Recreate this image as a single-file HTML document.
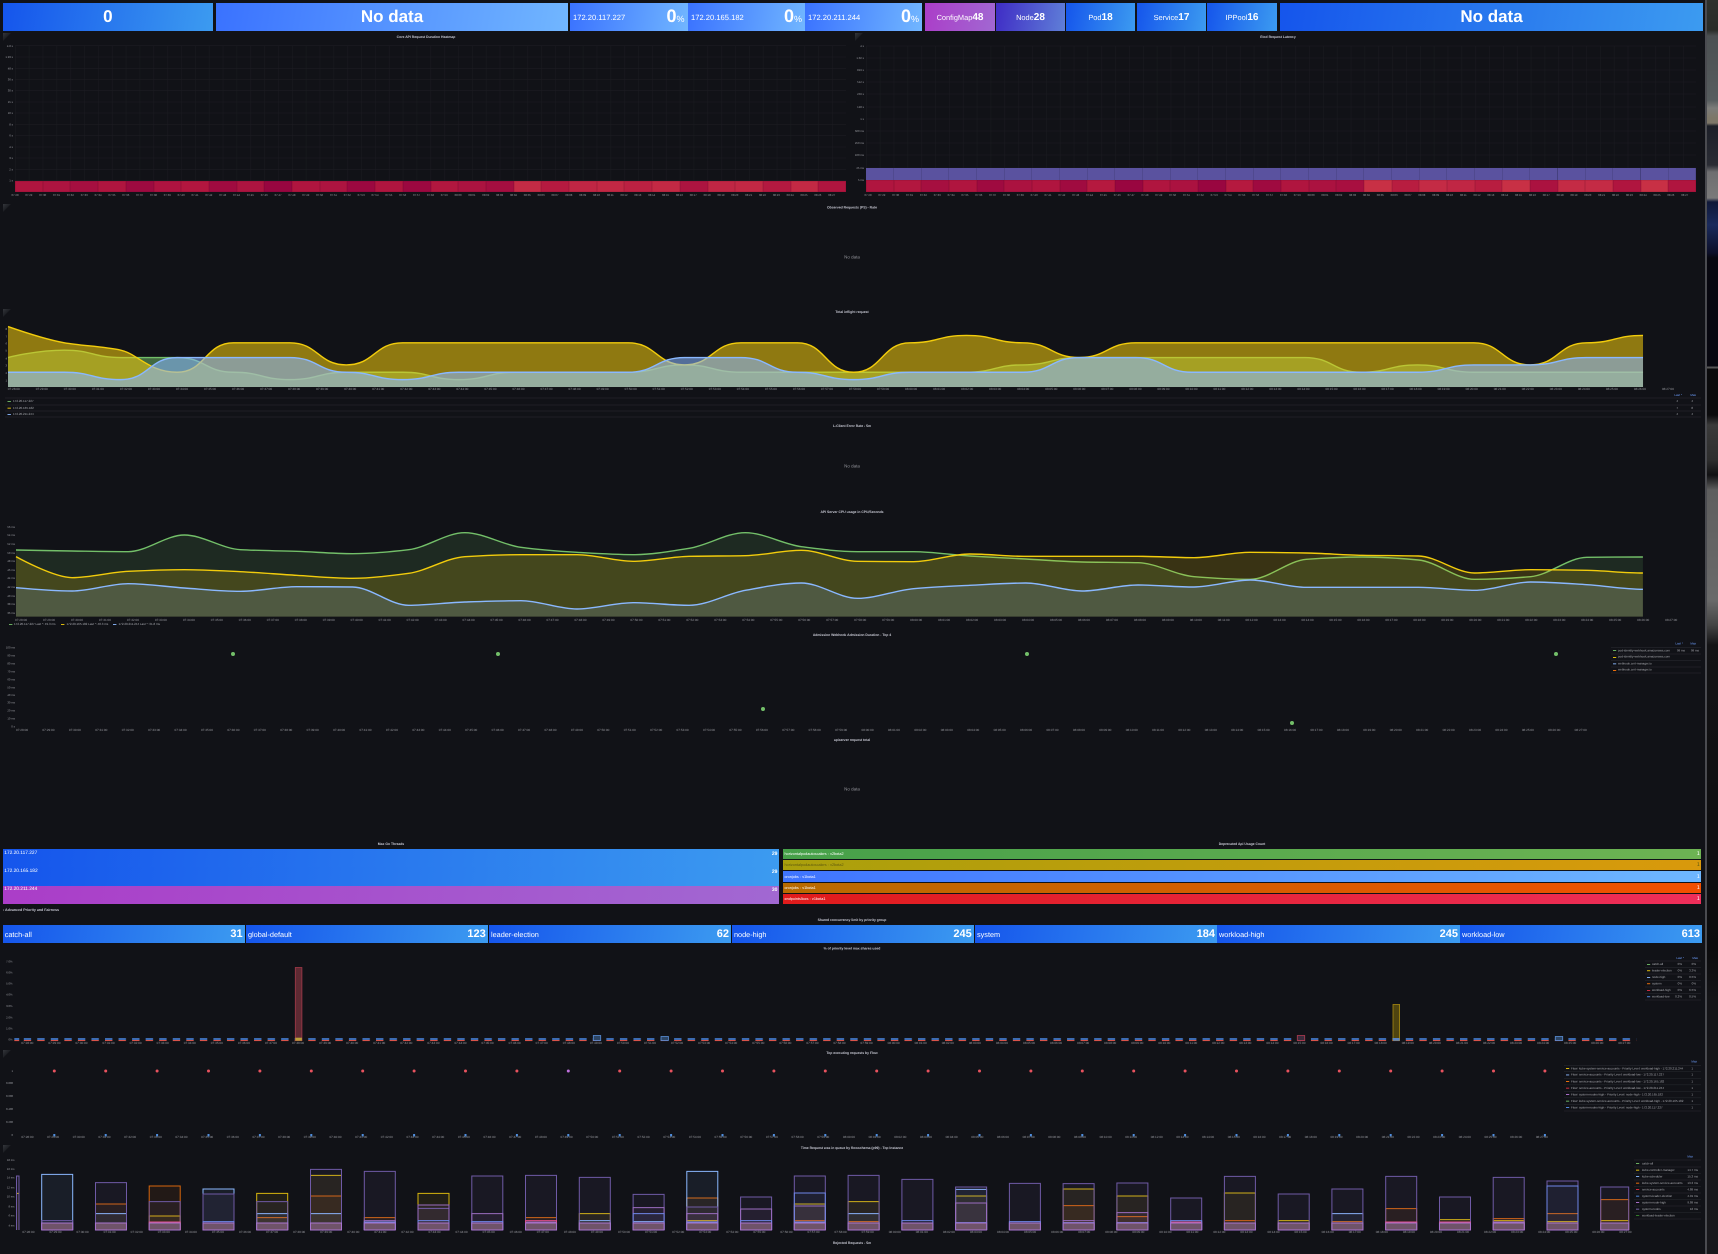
<!DOCTYPE html>
<html><head><meta charset="utf-8"><title>Kubernetes API Server Dashboard</title>
<style>
html,body{margin:0;padding:0;background:#111217}
body{position:relative;width:1718px;height:1254px;overflow:hidden;font-family:"Liberation Sans",sans-serif;text-rendering:geometricPrecision}
svg{position:absolute;left:0;top:0}
svg text{font-family:"Liberation Sans",sans-serif;text-rendering:geometricPrecision}
.x{font-size:3.1px;fill:#96979d;white-space:pre}
.h{font-size:3.4px;font-weight:700;fill:#c8c9d4;text-anchor:middle}
.n{font-size:4.5px;fill:#8e8f96;text-anchor:middle}
.y{font-size:2.8px;fill:#9a9ba1;text-anchor:end}
.l{font-size:3px;fill:#a8a9af}
.v{font-size:3px;fill:#a8a9af;text-anchor:end}
.k{font-size:3px;fill:#6e9fff;text-anchor:end}
.a{stroke:none}
.w{fill:none;stroke-width:1.4;vector-effect:non-scaling-stroke}
.b{vector-effect:non-scaling-stroke;stroke-width:1;fill-opacity:.075}
.s{position:absolute;display:flex;align-items:center;color:#fff;white-space:nowrap;overflow:hidden;box-sizing:border-box}
.top{top:3.3px;height:27.7px}
.dk{background:linear-gradient(100deg,#1555ec,#3c9bf0)}
.md{background:linear-gradient(100deg,#3a72ff,#71b6ff)}
.c{justify-content:center}
.big{font-size:17px;font-weight:700}
.ip{justify-content:space-between;padding:0 3px;font-size:7.6px}
.ip b{font-size:18px;line-height:18px}.ip b small{font-size:9px;font-weight:400}
.kn{justify-content:center;font-size:7.4px}.kn b{font-size:10px}
.st{top:925px;height:18px;justify-content:space-between;padding:0 2px;font-size:7.3px}
.st b{font-size:11px}
.th{left:2.7px;width:776.3px;height:18.4px;align-items:flex-start;justify-content:space-between;padding:1.5px 1.6px;font-size:4.8px}
.th b{font-size:5px}
.dp{left:783.3px;width:917.7px;justify-content:space-between;padding:0 1.2px;font-size:3.8px}
.dp b{font-size:5.5px;font-weight:400}
.cells{position:absolute;display:flex}
.cells i{flex:1;box-shadow:inset 0 0 0 .4px rgba(60,0,20,.25)}
</style></head><body>
<svg width="1718" height="1254" viewBox="0 0 1718 1254" xmlns="http://www.w3.org/2000/svg">
<defs>
<pattern id="g1" x="15" y="0" width="13.85" height="1254" patternUnits="userSpaceOnUse"><path d="M.25 0V1254" stroke="#1a1b20" stroke-width=".5"/></pattern>
<pattern id="g2" x="866" y="0" width="13.85" height="1254" patternUnits="userSpaceOnUse"><path d="M.25 0V1254" stroke="#1a1b20" stroke-width=".5"/></pattern>
<pattern id="pb" x="23.7" y="1030" width="13.55" height="20" patternUnits="userSpaceOnUse"><rect x="0" y="8" width="7.4" height="2" fill="#3d6cb3"/><rect x="0" y="10" width="7.4" height="1.1" fill="#d9534a"/></pattern>
<linearGradient id="cn" x1="0" y1="0" x2="1" y2="1"><stop offset="0" stop-color="#34363b"/><stop offset=".55" stop-color="#1a1c20"/><stop offset=".56" stop-color="#111217"/></linearGradient>
</defs>

<!-- corners -->
<g fill="url(#cn)">
<path d="M3 33h8l-8 8z"/><path d="M855 33h8l-8 8z"/><path d="M3 204h8l-8 8z"/><path d="M3 309h8l-8 8z"/><path d="M3 1050h8l-8 8z"/><path d="M3 1145h8l-8 8z"/>
</g>

<!-- heatmap grids -->
<rect x="15" y="46" width="831" height="135" fill="url(#g1)"/>
<path stroke="#1c1d22" stroke-width=".6" d="M15 45.7H846M15 57H846M15 68.3H846M15 79.4H846M15 90.7H846M15 102H846M15 113H846M15 124.4H846M15 135.7H846M15 147H846M15 158H846M15 169.3H846M15 180.4H846"/>
<rect x="866" y="46" width="830" height="122" fill="url(#g2)"/>
<path stroke="#1c1d22" stroke-width=".6" d="M866 46H1696M866 58H1696M866 70H1696M866 82H1696M866 94H1696M866 107H1696M866 119H1696M866 131H1696M866 143H1696M866 155H1696M866 168H1696"/>

<text class="h" x="426" y="38.2">Core API Request Duration Heatmap</text>
<text class="h" x="1278" y="38.2">Etcd Request Latency</text>
<g class="y">
<text class="y" x="13" y="47">4.8 s</text><text class="y" x="13" y="58">1.93 s</text><text class="y" x="13" y="69.3">48 s</text><text class="y" x="13" y="80.4">36 s</text><text class="y" x="13" y="91.7">30 s</text><text class="y" x="13" y="103">15 s</text><text class="y" x="13" y="114">10 s</text><text class="y" x="13" y="125.4">8 s</text><text class="y" x="13" y="136.7">6 s</text><text class="y" x="13" y="148">4 s</text><text class="y" x="13" y="159">3 s</text><text class="y" x="13" y="170.3">2 s</text><text class="y" x="13" y="181.4">1 s</text>
<text class="y" x="864" y="47">4 s</text><text class="y" x="864" y="59">1.02 s</text><text class="y" x="864" y="71">819 s</text><text class="y" x="864" y="83">512 s</text><text class="y" x="864" y="95">256 s</text><text class="y" x="864" y="108">128 s</text><text class="y" x="864" y="120">1 s</text><text class="y" x="864" y="132">500 ms</text><text class="y" x="864" y="144">250 ms</text><text class="y" x="864" y="156">100 ms</text><text class="y" x="864" y="169">25 ms</text><text class="y" x="864" y="181">5 ms</text>
</g>
<text class="x" x="11.5" y="195.8" style="font-size:2.8px;word-spacing:6.07px">07:28 07:29 07:30 07:31 07:32 07:33 07:34 07:35 07:36 07:37 07:38 07:39 07:40 07:41 07:42 07:43 07:44 07:45 07:46 07:47 07:48 07:49 07:50 07:51 07:52 07:53 07:54 07:55 07:56 07:57 07:58 07:59 08:00 08:01 08:02 08:03 08:04 08:05 08:06 08:07 08:08 08:09 08:10 08:11 08:12 08:13 08:14 08:15 08:16 08:17 08:18 08:19 08:20 08:21 08:22 08:23 08:24 08:25 08:26 08:27</text>
<text class="x" x="864.5" y="195.8" style="font-size:2.8px;word-spacing:6.07px">07:28 07:29 07:30 07:31 07:32 07:33 07:34 07:35 07:36 07:37 07:38 07:39 07:40 07:41 07:42 07:43 07:44 07:45 07:46 07:47 07:48 07:49 07:50 07:51 07:52 07:53 07:54 07:55 07:56 07:57 07:58 07:59 08:00 08:01 08:02 08:03 08:04 08:05 08:06 08:07 08:08 08:09 08:10 08:11 08:12 08:13 08:14 08:15 08:16 08:17 08:18 08:19 08:20 08:21 08:22 08:23 08:24 08:25 08:26 08:27</text>

<text class="h" x="852" y="208.4">Observed Requests (PS) - Rate</text>
<text class="n" x="852" y="258.5">No data</text>

<!-- inflight -->
<text class="h" x="852" y="313">Total inflight request</text>
<g transform="translate(8,387) scale(56.38,-7.37)">
<path class="a" fill="#73BF69" fill-opacity=".5" d="M0 4S.5 5 1 5S1.5 4 2 4S2.5 4 3 4S3.5 2 4 2S4.5 1 5 1S5.5 2 6 2S6.5 2 7 2S7.5 1 8 1S8.5 2 9 2S9.5 2 10 2S10.5 2 11 2S11.5 3 12 3S12.5 2 13 2S13.5 2 14 2S14.5 2 15 2S15.5 2 16 2S16.5 2 17 2S17.5 3 18 3S18.5 4 19 4S19.5 4 20 4S20.5 4 21 4S21.5 4 22 4S22.5 4 23 4S23.5 2 24 2S24.5 3 25 3S25.5 2 26 2S26.5 2 27 2S27.5 2 28 2S28.5 2 29 2V0H0Z"/>
<path class="w" stroke="#73BF69" d="M0 4S.5 5 1 5S1.5 4 2 4S2.5 4 3 4S3.5 2 4 2S4.5 1 5 1S5.5 2 6 2S6.5 2 7 2S7.5 1 8 1S8.5 2 9 2S9.5 2 10 2S10.5 2 11 2S11.5 3 12 3S12.5 2 13 2S13.5 2 14 2S14.5 2 15 2S15.5 2 16 2S16.5 2 17 2S17.5 3 18 3S18.5 4 19 4S19.5 4 20 4S20.5 4 21 4S21.5 4 22 4S22.5 4 23 4S23.5 2 24 2S24.5 3 25 3S25.5 2 26 2S26.5 2 27 2S27.5 2 28 2S28.5 2 29 2"/>
<path class="a" fill="#F2CC0C" fill-opacity=".56" d="M0 8.2C.3 7.4 .7 6.4 1 6C1.3 5.6 1.7 5.5 2 5S2.5 2 3 2S3.5 6 4 6S4.5 6 5 6S5.5 3 6 3S6.5 6 7 6S7.5 6 8 6S8.5 6 9 6S9.5 6 10 6S10.5 6 11 6S11.5 3 12 3S12.5 6 13 6S13.5 6 14 6S14.5 2 15 2S15.5 6 16 6S16.5 7 17 7S17.5 6 18 6S18.5 4 19 4S19.5 6 20 6S20.5 6 21 6S21.5 6 22 6S22.5 6 23 6S23.5 6 24 6S24.5 6 25 6S25.5 6 26 6S26.5 3 27 3S27.5 6 28 6S28.5 7 29 7V0H0Z"/>
<path class="w" stroke="#F2CC0C" d="M0 8.2C.3 7.4 .7 6.4 1 6C1.3 5.6 1.7 5.5 2 5S2.5 2 3 2S3.5 6 4 6S4.5 6 5 6S5.5 3 6 3S6.5 6 7 6S7.5 6 8 6S8.5 6 9 6S9.5 6 10 6S10.5 6 11 6S11.5 3 12 3S12.5 6 13 6S13.5 6 14 6S14.5 2 15 2S15.5 6 16 6S16.5 7 17 7S17.5 6 18 6S18.5 4 19 4S19.5 6 20 6S20.5 6 21 6S21.5 6 22 6S22.5 6 23 6S23.5 6 24 6S24.5 6 25 6S25.5 6 26 6S26.5 3 27 3S27.5 6 28 6S28.5 7 29 7"/>
<path class="a" fill="#8AB8FF" fill-opacity=".56" d="M0 2S.5 2 1 2S1.5 1 2 1S2.5 4 3 4S3.5 4 4 4S4.5 4 5 4S5.5 2 6 2S6.5 1 7 1S7.5 2 8 2S8.5 2 9 2S9.5 2 10 2S10.5 2 11 2S11.5 4 12 4S12.5 4 13 4S13.5 2 14 2S14.5 1 15 1S15.5 2 16 2S16.5 2 17 2S17.5 2 18 2S18.5 4 19 4S19.5 4 20 4S20.5 2 21 2S21.5 2 22 2S22.5 2 23 2S23.5 2 24 2S24.5 2 25 2S25.5 3 26 3S26.5 3 27 3S27.5 4 28 4S28.5 4 29 4V0H0Z"/>
<path class="w" stroke="#8AB8FF" d="M0 2S.5 2 1 2S1.5 1 2 1S2.5 4 3 4S3.5 4 4 4S4.5 4 5 4S5.5 2 6 2S6.5 1 7 1S7.5 2 8 2S8.5 2 9 2S9.5 2 10 2S10.5 2 11 2S11.5 4 12 4S12.5 4 13 4S13.5 2 14 2S14.5 1 15 1S15.5 2 16 2S16.5 2 17 2S17.5 2 18 2S18.5 4 19 4S19.5 4 20 4S20.5 2 21 2S21.5 2 22 2S22.5 2 23 2S23.5 2 24 2S24.5 2 25 2S25.5 3 26 3S26.5 3 27 3S27.5 4 28 4S28.5 4 29 4"/>
</g>
<text class="y" x="7" y="330">8</text><text class="y" x="7" y="337.5">7</text><text class="y" x="7" y="344.5">6</text><text class="y" x="7" y="351.5">5</text><text class="y" x="7" y="359.5">4</text><text class="y" x="7" y="366.5">3</text><text class="y" x="7" y="374">2</text><text class="y" x="7" y="381.5">1</text>
<text class="x" x="7.7" y="390" style="word-spacing:15.14px">07:28:00 07:29:00 07:30:00 07:31:00 07:32:00 07:33:00 07:34:00 07:35:00 07:36:00 07:37:00 07:38:00 07:39:00 07:40:00 07:41:00 07:42:00 07:43:00 07:44:00 07:45:00 07:46:00 07:47:00 07:48:00 07:49:00 07:50:00 07:51:00 07:52:00 07:53:00 07:54:00 07:55:00 07:56:00 07:57:00 07:58:00 07:59:00 08:00:00 08:01:00 08:02:00 08:03:00 08:04:00 08:05:00 08:06:00 08:07:00 08:08:00 08:09:00 08:10:00 08:11:00 08:12:00 08:13:00 08:14:00 08:15:00 08:16:00 08:17:00 08:18:00 08:19:00 08:20:00 08:21:00 08:22:00 08:23:00 08:24:00 08:25:00 08:26:00 08:27:00</text>
<path stroke="#23252b" stroke-width=".7" d="M5 398H1701M5 405H1701M5 411H1701M5 417H1701"/>
<rect x="7.5" y="401" width="3.4" height=".9" fill="#73BF69"/><rect x="7.5" y="407.7" width="3.4" height=".9" fill="#F2CC0C"/><rect x="7.5" y="414" width="3.4" height=".9" fill="#8AB8FF"/>
<text class="l" x="13" y="402">172.20.117.227</text><text class="l" x="13" y="409">172.20.165.182</text><text class="l" x="13" y="415">172.20.211.244</text>
<text class="k" x="1682" y="396">Last *</text><text class="k" x="1696" y="396">Max</text>
<text class="v" x="1678" y="402">4</text><text class="v" x="1693" y="402">4</text><text class="v" x="1678" y="409">7</text><text class="v" x="1693" y="409">8</text><text class="v" x="1678" y="415">4</text><text class="v" x="1693" y="415">4</text>

<text class="h" x="852" y="427">L-Client Error Rate - 5m</text>
<text class="n" x="852" y="467.5">No data</text>

<!-- CPU -->
<text class="h" x="852" y="513">API Server CPU usage in CPU/Seconds</text>
<g transform="translate(16,300) scale(56.1,.33333)">
<path class="a" fill="#73BF69" fill-opacity=".14" d="M0 750S.67 752.2 1 753S1.67 755 2 755S2.67 705 3 705S3.67 746 4 749S4.67 752.1 5 754S5.67 761 6 761S6.67 755.5 7 749S7.67 698 8 698S8.67 734.5 9 742S9.67 753.8 10 757S10.67 764 11 764S11.67 754 12 745S12.67 698 13 698S13.67 732.7 14 740S14.67 755 15 755S15.67 755 16 755S16.67 764.5 17 768S17.67 774 18 777S18.67 784.9 19 786S19.67 786.7 20 788S20.67 825.5 21 830S21.67 838 22 838S22.67 782.2 23 778S23.67 771 24 771S24.67 774.8 25 780S25.67 838 26 838S26.67 834.7 27 830S27.67 772.7 28 772S28.67 771 29 771V950H0Z"/>
<path class="w" stroke="#73BF69" d="M0 750S.67 752.2 1 753S1.67 755 2 755S2.67 705 3 705S3.67 746 4 749S4.67 752.1 5 754S5.67 761 6 761S6.67 755.5 7 749S7.67 698 8 698S8.67 734.5 9 742S9.67 753.8 10 757S10.67 764 11 764S11.67 754 12 745S12.67 698 13 698S13.67 732.7 14 740S14.67 755 15 755S15.67 755 16 755S16.67 764.5 17 768S17.67 774 18 777S18.67 784.9 19 786S19.67 786.7 20 788S20.67 825.5 21 830S21.67 838 22 838S22.67 782.2 23 778S23.67 771 24 771S24.67 774.8 25 780S25.67 838 26 838S26.67 834.7 27 830S27.67 772.7 28 772S28.67 771 29 771"/>
<path class="a" fill="#F2CC0C" fill-opacity=".18" d="M0 770S.67 833 1 833S1.67 816.6 2 814S2.67 809 3 809S3.67 812.4 4 815S4.67 822.7 5 826S5.67 835 6 835S6.67 827.7 7 820S7.67 773.6 8 770S8.67 764 9 764S9.67 764 10 764S10.67 784 11 784S11.67 770.2 12 769S12.67 768.2 13 767S13.67 751 14 751S14.67 783.4 15 784S15.67 785 16 785S16.67 762 17 762S17.67 769 18 769S18.67 769 19 769S19.67 769 20 769S20.67 773 21 773S21.67 757 22 757S22.67 758 23 759S23.67 765 24 766S24.67 766.7 25 768S25.67 819 26 819S26.67 809 27 809S27.67 809.9 28 811S28.67 819 29 819V950H0Z"/>
<path class="w" stroke="#F2CC0C" d="M0 770S.67 833 1 833S1.67 816.6 2 814S2.67 809 3 809S3.67 812.4 4 815S4.67 822.7 5 826S5.67 835 6 835S6.67 827.7 7 820S7.67 773.6 8 770S8.67 764 9 764S9.67 764 10 764S10.67 784 11 784S11.67 770.2 12 769S12.67 768.2 13 767S13.67 751 14 751S14.67 783.4 15 784S15.67 785 16 785S16.67 762 17 762S17.67 769 18 769S18.67 769 19 769S19.67 769 20 769S20.67 773 21 773S21.67 757 22 757S22.67 758 23 759S23.67 765 24 766S24.67 766.7 25 768S25.67 819 26 819S26.67 809 27 809S27.67 809.9 28 811S28.67 819 29 819"/>
<path class="a" fill="#8AB8FF" fill-opacity=".16" d="M0 863S.67 873 1 873S1.67 851 2 851S2.67 860.2 3 864S3.67 874 4 874S4.67 860 5 860S5.67 860.3 6 861S6.67 916 7 916S7.67 907.9 8 906S8.67 902 9 902S9.67 927 10 927S10.67 908 11 908S11.67 916 12 916S12.67 880.9 13 871S13.67 849 14 849S14.67 895 15 895S15.67 871 16 866S16.67 858.7 17 856S17.67 849 18 849S18.67 873 19 873S19.67 855 20 855S20.67 861 21 861S21.67 840 22 840S22.67 862 23 862S23.67 862 24 862S24.67 862 25 862S25.67 871 26 871S26.67 846 27 846S27.67 850.6 28 854S28.67 868 29 868V950H0Z"/>
<path class="w" stroke="#8AB8FF" d="M0 863S.67 873 1 873S1.67 851 2 851S2.67 860.2 3 864S3.67 874 4 874S4.67 860 5 860S5.67 860.3 6 861S6.67 916 7 916S7.67 907.9 8 906S8.67 902 9 902S9.67 927 10 927S10.67 908 11 908S11.67 916 12 916S12.67 880.9 13 871S13.67 849 14 849S14.67 895 15 895S15.67 871 16 866S16.67 858.7 17 856S17.67 849 18 849S18.67 873 19 873S19.67 855 20 855S20.67 861 21 861S21.67 840 22 840S22.67 862 23 862S23.67 862 24 862S24.67 862 25 862S25.67 871 26 871S26.67 846 27 846S27.67 850.6 28 854S28.67 868 29 868"/>
</g>
<text class="y" x="15" y="528">56 ms</text><text class="y" x="15" y="536">54 ms</text><text class="y" x="15" y="545">52 ms</text><text class="y" x="15" y="554">50 ms</text><text class="y" x="15" y="562">48 ms</text><text class="y" x="15" y="571">46 ms</text><text class="y" x="15" y="579">44 ms</text><text class="y" x="15" y="588">42 ms</text><text class="y" x="15" y="597">40 ms</text><text class="y" x="15" y="605">38 ms</text><text class="y" x="15" y="614">36 ms</text>
<text class="x" x="15" y="621" style="word-spacing:15.07px">07:28:00 07:29:00 07:30:00 07:31:00 07:32:00 07:33:00 07:34:00 07:35:00 07:36:00 07:37:00 07:38:00 07:39:00 07:40:00 07:41:00 07:42:00 07:43:00 07:44:00 07:45:00 07:46:00 07:47:00 07:48:00 07:49:00 07:50:00 07:51:00 07:52:00 07:53:00 07:54:00 07:55:00 07:56:00 07:57:00 07:58:00 07:59:00 08:00:00 08:01:00 08:02:00 08:03:00 08:04:00 08:05:00 08:06:00 08:07:00 08:08:00 08:09:00 08:10:00 08:11:00 08:12:00 08:13:00 08:14:00 08:15:00 08:16:00 08:17:00 08:18:00 08:19:00 08:20:00 08:21:00 08:22:00 08:23:00 08:24:00 08:25:00 08:26:00 08:27:00</text>
<rect x="9" y="624" width="3.4" height=".9" fill="#73BF69"/><rect x="61" y="624" width="3.4" height=".9" fill="#F2CC0C"/><rect x="113" y="624" width="3.4" height=".9" fill="#8AB8FF"/>
<text class="l" x="14" y="625">172.20.117.227 Last *: 49.3 ms</text><text class="l" x="66.5" y="625">172.20.165.182 Last *: 48.3 ms</text><text class="l" x="118.5" y="625">172.20.211.244 Last *: 31.8 ms</text>

<!-- Admission -->
<text class="h" x="852" y="636">Admission Webhook Admission Duration - Top 4</text>
<text class="y" x="15" y="648.7">100 ms</text><text class="y" x="15" y="656.7">90 ms</text><text class="y" x="15" y="664.7">80 ms</text><text class="y" x="15" y="672.7">70 ms</text><text class="y" x="15" y="680.7">60 ms</text><text class="y" x="15" y="688.7">50 ms</text><text class="y" x="15" y="696">40 ms</text><text class="y" x="15" y="703.7">30 ms</text><text class="y" x="15" y="711.7">20 ms</text><text class="y" x="15" y="719.7">10 ms</text><text class="y" x="15" y="727.7">0 s</text>
<path stroke="#73BF69" stroke-width="4" stroke-linecap="round" d="M233 654h0M498 654h0M1027 654h0M1556 654h0M763 709h0M1292 723h0"/>
<text class="x" x="16" y="730.8" style="word-spacing:13.52px">07:28:00 07:29:00 07:30:00 07:31:00 07:32:00 07:33:00 07:34:00 07:35:00 07:36:00 07:37:00 07:38:00 07:39:00 07:40:00 07:41:00 07:42:00 07:43:00 07:44:00 07:45:00 07:46:00 07:47:00 07:48:00 07:49:00 07:50:00 07:51:00 07:52:00 07:53:00 07:54:00 07:55:00 07:56:00 07:57:00 07:58:00 07:59:00 08:00:00 08:01:00 08:02:00 08:03:00 08:04:00 08:05:00 08:06:00 08:07:00 08:08:00 08:09:00 08:10:00 08:11:00 08:12:00 08:13:00 08:14:00 08:15:00 08:16:00 08:17:00 08:18:00 08:19:00 08:20:00 08:21:00 08:22:00 08:23:00 08:24:00 08:25:00 08:26:00 08:27:00</text>
<path stroke="#23252b" stroke-width=".7" d="M1611 647.5H1701M1611 654H1701M1611 660.5H1701M1611 667H1701M1611 673H1701"/>
<text class="k" x="1683" y="644.7">Last *</text><text class="k" x="1696" y="644.7">Max</text>
<rect x="1613" y="650" width="3.2" height=".9" fill="#73BF69"/><rect x="1613" y="657" width="3.2" height=".9" fill="#F2CC0C"/><rect x="1613" y="663.4" width="3.2" height=".9" fill="#8AB8FF"/><rect x="1613" y="670" width="3.2" height=".9" fill="#FF780A"/>
<text class="l" x="1618" y="651.7">pod-identity-webhook.amazonaws.com</text><text class="l" x="1618" y="657.7">pod-identity-webhook.amazonaws.com</text><text class="l" x="1618" y="664.7">webhook.cert-manager.io</text><text class="l" x="1618" y="670.7">webhook.cert-manager.io</text>
<text class="v" x="1685" y="651.7">99 ms</text><text class="v" x="1699" y="651.7">99 ms</text>

<text class="h" x="852" y="741">apiserver request total</text>
<text class="n" x="852" y="790.5">No data</text>

<text class="h" x="391" y="845">Max Go Threads</text>
<text class="h" x="1242" y="845">Deprecated Api Usage Count</text>
<text x="3" y="911" style="font-size:3.6px;font-weight:700;fill:#c8c9d4">&#8250; Advanced Priority and Fairness</text>
<text class="h" x="852" y="921">Shared concurrency limit by priority group</text>
<text class="h" x="852" y="949.6">% of priority level max shares used</text>

<!-- % bars -->
<text class="y" x="12.5" y="962.7">7.0%</text><text class="y" x="12.5" y="973.7">6.0%</text><text class="y" x="12.5" y="984.7">5.0%</text><text class="y" x="12.5" y="995.7">4.0%</text><text class="y" x="12.5" y="1007">3.0%</text><text class="y" x="12.5" y="1018.7">2.0%</text><text class="y" x="12.5" y="1029.7">1.0%</text><text class="y" x="12.5" y="1040.7">0%</text>
<rect x="23.7" y="1037.7" width="1612.5" height="3.6" fill="url(#pb)"/>
<rect x="14.3" y="1038" width="4.9" height="2" fill="#3d6cb3"/><rect x="14.3" y="1040" width="4.9" height="1.1" fill="#d9534a"/>
<rect x="295.3" y="967.5" width="6.6" height="73" fill="#5e2a33" stroke="#a03848" stroke-width=".8"/>
<rect x="295.3" y="1037.7" width="6.6" height="3" fill="#b9a03a"/>
<rect x="1393" y="1004.5" width="6.6" height="36" fill="#4f4410" stroke="#a98a10" stroke-width=".8"/>
<rect x="1393" y="1038" width="6.6" height="2.7" fill="#5a84c4"/>
<rect x="593.3" y="1035.5" width="7.4" height="5" fill="#2c4565" stroke="#5a8fd8" stroke-width=".8"/>
<rect x="661" y="1036.5" width="7.4" height="4" fill="#2c4565" stroke="#5a8fd8" stroke-width=".8"/>
<rect x="1297.3" y="1035.5" width="7.4" height="5" fill="#3a2c3c" stroke="#b03a50" stroke-width=".8"/>
<rect x="1555.3" y="1036.5" width="7.4" height="4" fill="#2c4565" stroke="#5a8fd8" stroke-width=".8"/>
<text class="x" x="21.3" y="1043.8" style="word-spacing:14.17px">07:28:00 07:29:00 07:30:00 07:31:00 07:32:00 07:33:00 07:34:00 07:35:00 07:36:00 07:37:00 07:38:00 07:39:00 07:40:00 07:41:00 07:42:00 07:43:00 07:44:00 07:45:00 07:46:00 07:47:00 07:48:00 07:49:00 07:50:00 07:51:00 07:52:00 07:53:00 07:54:00 07:55:00 07:56:00 07:57:00 07:58:00 07:59:00 08:00:00 08:01:00 08:02:00 08:03:00 08:04:00 08:05:00 08:06:00 08:07:00 08:08:00 08:09:00 08:10:00 08:11:00 08:12:00 08:13:00 08:14:00 08:15:00 08:16:00 08:17:00 08:18:00 08:19:00 08:20:00 08:21:00 08:22:00 08:23:00 08:24:00 08:25:00 08:26:00 08:27:00</text>
<path stroke="#23252b" stroke-width=".7" d="M1645 961H1701M1645 967.5H1701M1645 974H1701M1645 980.5H1701M1645 987H1701M1645 993.5H1701M1645 1000H1701"/>
<text class="k" x="1684" y="959">Last *</text><text class="k" x="1698" y="959">Max</text>
<rect x="1647" y="964" width="3.2" height=".9" fill="#73BF69"/><rect x="1647" y="970.3" width="3.2" height=".9" fill="#F2CC0C"/><rect x="1647" y="977" width="3.2" height=".9" fill="#8AB8FF"/><rect x="1647" y="983.3" width="3.2" height=".9" fill="#FF780A"/><rect x="1647" y="990" width="3.2" height=".9" fill="#E02F44"/><rect x="1647" y="996.3" width="3.2" height=".9" fill="#5794F2"/>
<text class="l" x="1652" y="965">catch-all</text><text class="l" x="1652" y="971.7">leader-election</text><text class="l" x="1652" y="978">node-high</text><text class="l" x="1652" y="984.7">system</text><text class="l" x="1652" y="991">workload-high</text><text class="l" x="1652" y="997.7">workload-low</text>
<text class="v" x="1682" y="965">0%</text><text class="v" x="1696" y="965">0%</text><text class="v" x="1682" y="971.7">0%</text><text class="v" x="1696" y="971.7">3.3%</text><text class="v" x="1682" y="978">0%</text><text class="v" x="1696" y="978">0.5%</text><text class="v" x="1682" y="984.7">0%</text><text class="v" x="1696" y="984.7">0%</text><text class="v" x="1682" y="991">0%</text><text class="v" x="1696" y="991">6.5%</text><text class="v" x="1682" y="997.7">0.2%</text><text class="v" x="1696" y="997.7">0.5%</text>

<!-- flow points -->
<text class="h" x="852" y="1054">Top executing requests by Flow</text>
<text class="y" x="13" y="1072">1</text><text class="y" x="13" y="1084">0.800</text><text class="y" x="13" y="1097">0.600</text><text class="y" x="13" y="1110">0.400</text><text class="y" x="13" y="1123">0.200</text><text class="y" x="13" y="1136">0</text>
<path fill="none" stroke="#e8525e" stroke-width="3" stroke-linecap="round" d="M54.3 1071h0m51.4 0h0m51.4 0h0m51.4 0h0m51.4 0h0m51.4 0h0m51.4 0h0m51.4 0h0m51.4 0h0m51.4 0h0m102.8 0h0m51.4 0h0m51.4 0h0m51.4 0h0m51.4 0h0m51.4 0h0m51.4 0h0m51.4 0h0m51.4 0h0m51.4 0h0m51.4 0h0m51.4 0h0m51.4 0h0m51.4 0h0m51.4 0h0m51.4 0h0m51.4 0h0m51.4 0h0m51.4 0h0"/>
<path fill="none" stroke="#c070dd" stroke-width="3" stroke-linecap="round" d="M568.3 1071h0"/>
<path fill="none" stroke="#4f8fe0" stroke-width="2" d="M54.3 1134v2.5m51.4 -2.5v2.5m51.4 -2.5v2.5m51.4 -2.5v2.5m51.4 -2.5v2.5m51.4 -2.5v2.5m51.4 -2.5v2.5m51.4 -2.5v2.5m51.4 -2.5v2.5m51.4 -2.5v2.5m51.4 -2.5v2.5m51.4 -2.5v2.5m51.4 -2.5v2.5m51.4 -2.5v2.5m51.4 -2.5v2.5m51.4 -2.5v2.5m51.4 -2.5v2.5m51.4 -2.5v2.5m51.4 -2.5v2.5m51.4 -2.5v2.5m51.4 -2.5v2.5m51.4 -2.5v2.5m51.4 -2.5v2.5m51.4 -2.5v2.5m51.4 -2.5v2.5m51.4 -2.5v2.5m51.4 -2.5v2.5m51.4 -2.5v2.5m51.4 -2.5v2.5m51.4 -2.5v2.5"/>
<text class="x" x="21.4" y="1137.8" style="word-spacing:12.77px">07:28:00 07:29:00 07:30:00 07:31:00 07:32:00 07:33:00 07:34:00 07:35:00 07:36:00 07:37:00 07:38:00 07:39:00 07:40:00 07:41:00 07:42:00 07:43:00 07:44:00 07:45:00 07:46:00 07:47:00 07:48:00 07:49:00 07:50:00 07:51:00 07:52:00 07:53:00 07:54:00 07:55:00 07:56:00 07:57:00 07:58:00 07:59:00 08:00:00 08:01:00 08:02:00 08:03:00 08:04:00 08:05:00 08:06:00 08:07:00 08:08:00 08:09:00 08:10:00 08:11:00 08:12:00 08:13:00 08:14:00 08:15:00 08:16:00 08:17:00 08:18:00 08:19:00 08:20:00 08:21:00 08:22:00 08:23:00 08:24:00 08:25:00 08:26:00 08:27:00</text>
<path stroke="#23252b" stroke-width=".7" d="M1564 1065.5H1701M1564 1071.7H1701M1564 1078.3H1701M1564 1084.8H1701M1564 1091.3H1701M1564 1097.8H1701M1564 1104.4H1701M1564 1111H1701"/>
<text class="k" x="1697" y="1062.7">Max</text>
<rect x="1566" y="1068" width="3.2" height=".9" fill="#F2CC0C"/><rect x="1566" y="1074.5" width="3.2" height=".9" fill="#8AB8FF"/><rect x="1566" y="1081" width="3.2" height=".9" fill="#FF780A"/><rect x="1566" y="1087.7" width="3.2" height=".9" fill="#E02F44"/><rect x="1566" y="1094" width="3.2" height=".9" fill="#B877D9"/><rect x="1566" y="1100.7" width="3.2" height=".9" fill="#73BF69"/><rect x="1566" y="1107" width="3.2" height=".9" fill="#5794F2"/>
<g class="l">
<text class="l" x="1571" y="1069.7">Flow: kube-system-service-accounts - Priority Level: workload-high - 172.20.211.244</text>
<text class="l" x="1571" y="1075.7">Flow: service-accounts - Priority Level: workload-low - 172.20.117.227</text>
<text class="l" x="1571" y="1082.7">Flow: service-accounts - Priority Level: workload-low - 172.20.165.182</text>
<text class="l" x="1571" y="1089">Flow: service-accounts - Priority Level: workload-low - 172.20.211.244</text>
<text class="l" x="1571" y="1095.7">Flow: system-nodes-high - Priority Level: node-high - 172.20.165.182</text>
<text class="l" x="1571" y="1102">Flow: kube-system-service-accounts - Priority Level: workload-high - 172.20.165.182</text>
<text class="l" x="1571" y="1108.7">Flow: system-nodes-high - Priority Level: node-high - 172.20.117.227</text>
</g>
<text class="v" x="1693" y="1069.7">1</text><text class="v" x="1693" y="1075.7">1</text><text class="v" x="1693" y="1082.7">1</text><text class="v" x="1693" y="1089">1</text><text class="v" x="1693" y="1095.7">1</text><text class="v" x="1693" y="1102">1</text><text class="v" x="1693" y="1108.7">1</text>

<!-- queue bars -->
<text class="h" x="852" y="1149">Time Request was in queue by flowschema (p99) - Top Instance</text>
<text class="y" x="14.5" y="1161">18 ms</text><text class="y" x="14.5" y="1170">16 ms</text><text class="y" x="14.5" y="1178.7">14 ms</text><text class="y" x="14.5" y="1188.3">12 ms</text><text class="y" x="14.5" y="1197.3">10 ms</text><text class="y" x="14.5" y="1207.3">8 ms</text><text class="y" x="14.5" y="1216.3">6 ms</text><text class="y" x="14.5" y="1226.3">4 ms</text>
<g transform="translate(0,950) scale(1,.33333)">
<path class="b" fill="#F2CC0C" stroke="#d8b60e" d="M149.2 840V798h31V840M256.7 840V730h31V840M310.5 840V676h31V840M418 840V730h31V840M579.3 840V791h31V840M686.8 840V812h31V840M794.3 840V762h31V840M848.1 840V755h31V840M955.6 840V738h31V840M1063.1 840V717h31V840M1116.9 840V738h31V840M1224.4 840V729h31V840M1278.2 840V812h31V840M1439.5 840V809h31V840M1493.2 840V812h31V840M1547 840V815h31V840M1600.7 840V812h28V840M16.5 840V730H19V840"/>
<path class="b" fill="#FF780A" stroke="#d8650c" d="M95.5 840V762h31V840M149.2 840V708h31V840M256.7 840V803h31V840M310.5 840V738h31V840M364.3 840V803h31V840M525.5 840V803h31V840M686.8 840V744h31V840M794.3 840V812h31V840M848.1 840V815h31V840M1063.1 840V767h31V840M1116.9 840V800h31V840M1224.4 840V812h31V840M1331.9 840V815h31V840M1385.7 840V776h31V840M1493.2 840V806h31V840M1547 840V791h31V840M1600.7 840V749h28V840"/>
<path class="b" fill="#8AB8FF" stroke="#8AB8FF" d="M41.7 840V673h31V840M95.5 840V791h31V840M203 840V717h31V840M256.7 840V791h31V840M310.5 840V791h31V840M579.3 840V812h31V840M633.1 840V815h31V840M686.8 840V664h31V840M848.1 840V791h31V840M955.6 840V718h31V840M1331.9 840V791h31V840"/>
<path class="b" fill="#806eb7" stroke="#6f5aa6" d="M16.5 840V678H19V840M41.7 840V812h31V840M95.5 840V698h31V840M149.2 840V755h31V840M203 840V732h31V840M256.7 840V755h31V840M310.5 840V658h31V840M364.3 840V664h31V840M418 840V775h31V840M471.8 840V678h31V840M525.5 840V676h31V840M579.3 840V682h31V840M633.1 840V733h31V840M686.8 840V771h31V840M740.6 840V741h31V840M794.3 840V678h31V840M848.1 840V676h31V840M901.9 840V688h31V840M955.6 840V711h31V840M1009.4 840V700h31V840M1063.1 840V701h31V840M1116.9 840V699h31V840M1170.7 840V744h31V840M1224.4 840V679h31V840M1278.2 840V732h31V840M1331.9 840V717h31V840M1385.7 840V679h31V840M1439.5 840V741h31V840M1493.2 840V682h31V840M1547 840V693h31V840M1600.7 840V711h28V840"/>
<path class="b" fill="#B877D9" stroke="#9a6cc0" d="M364.3 840V812h31V840M418 840V765h31V840M471.8 840V791h31V840M525.5 840V816h31V840M633.1 840V773h31V840M686.8 840V791h31V840M740.6 840V777h31V840M794.3 840V768h31V840M955.6 840V759h31V840M1063.1 840V812h31V840M1116.9 840V788h31V840M1493.2 840V816h31V840"/>
<path class="b" fill="#E0508a" stroke="#e0508a" d="M149.2 840V816h31V840M525.5 840V812h31V840M1170.7 840V816h31V840M1385.7 840V816h31V840M1439.5 840V816h31V840"/>
<path class="b" fill="#6f86e8" stroke="#6f86e8" d="M203 840V815h31V840M364.3 840V816h31V840M418 840V812h31V840M471.8 840V815h31V840M633.1 840V791h31V840M686.8 840V816h31V840M740.6 840V812h31V840M794.3 840V729h31V840M794.3 840V816h31V840M901.9 840V812h31V840M955.6 840V818h31V840M1009.4 840V815h31V840M1063.1 840V818h31V840M1116.9 840V818h31V840M1170.7 840V812h31V840M1547 840V708h31V840"/>
<path fill="#6f5369" stroke="#a874d0" stroke-width="1" vector-effect="non-scaling-stroke" d="M41.7 819h31v21h-31zm53.76 0h31v21h-31zm53.76 0h31v21h-31zm53.76 0h31v21h-31zm53.76 0h31v21h-31zm53.76 0h31v21h-31zm53.76 0h31v21h-31zm53.76 0h31v21h-31zm53.76 0h31v21h-31zm53.76 0h31v21h-31zm53.76 0h31v21h-31zm53.76 0h31v21h-31zm53.76 0h31v21h-31zm53.76 0h31v21h-31zm53.76 0h31v21h-31zm53.76 0h31v21h-31zm53.76 0h31v21h-31zm53.76 0h31v21h-31zm53.76 0h31v21h-31zm53.76 0h31v21h-31zm53.76 0h31v21h-31zm53.76 0h31v21h-31zm53.76 0h31v21h-31zm53.76 0h31v21h-31zm53.76 0h31v21h-31zm53.76 0h31v21h-31zm53.76 0h31v21h-31zm53.76 0h31v21h-31zm53.76 0h31v21h-31zm53.76 0h28v21h-28z"/>
</g>
<text class="x" x="22.4" y="1232.8" style="word-spacing:14.17px">07:28:00 07:29:00 07:30:00 07:31:00 07:32:00 07:33:00 07:34:00 07:35:00 07:36:00 07:37:00 07:38:00 07:39:00 07:40:00 07:41:00 07:42:00 07:43:00 07:44:00 07:45:00 07:46:00 07:47:00 07:48:00 07:49:00 07:50:00 07:51:00 07:52:00 07:53:00 07:54:00 07:55:00 07:56:00 07:57:00 07:58:00 07:59:00 08:00:00 08:01:00 08:02:00 08:03:00 08:04:00 08:05:00 08:06:00 08:07:00 08:08:00 08:09:00 08:10:00 08:11:00 08:12:00 08:13:00 08:14:00 08:15:00 08:16:00 08:17:00 08:18:00 08:19:00 08:20:00 08:21:00 08:22:00 08:23:00 08:24:00 08:25:00 08:26:00 08:27:00</text>
<text class="h" x="852" y="1244">Rejected Requests - 5m</text>
<path stroke="#23252b" stroke-width=".7" d="M1634 1160H1701M1634 1167H1701M1634 1173.3H1701M1634 1180H1701M1634 1186.3H1701M1634 1193H1701M1634 1199.3H1701M1634 1206H1701M1634 1212.3H1701M1634 1219H1701"/>
<text class="k" x="1693" y="1157.7">Max</text>
<rect x="1636" y="1163" width="3.2" height=".9" fill="#73BF69"/><rect x="1636" y="1169.7" width="3.2" height=".9" fill="#F2CC0C"/><rect x="1636" y="1176" width="3.2" height=".9" fill="#8AB8FF"/><rect x="1636" y="1182.7" width="3.2" height=".9" fill="#FF780A"/><rect x="1636" y="1189" width="3.2" height=".9" fill="#E02F44"/><rect x="1636" y="1195.7" width="3.2" height=".9" fill="#5794F2"/><rect x="1636" y="1202" width="3.2" height=".9" fill="#B877D9"/><rect x="1636" y="1208.7" width="3.2" height=".9" fill="#806eb7"/><rect x="1636" y="1215" width="3.2" height=".9" fill="#37872D"/>
<text class="l" x="1642" y="1164.7">catch-all</text><text class="l" x="1642" y="1171">kube-controller-manager</text><text class="l" x="1642" y="1177.7">kube-scheduler</text><text class="l" x="1642" y="1184">kube-system-service-accounts</text><text class="l" x="1642" y="1190.7">service-accounts</text><text class="l" x="1642" y="1197">system-leader-election</text><text class="l" x="1642" y="1203.7">system-node-high</text><text class="l" x="1642" y="1210">system-nodes</text><text class="l" x="1642" y="1216.7">workload-leader-election</text>
<text class="v" x="1698" y="1171">14.7 ms</text><text class="v" x="1698" y="1177.7">15.3 ms</text><text class="v" x="1698" y="1184">13.3 ms</text><text class="v" x="1698" y="1190.7">4.89 ms</text><text class="v" x="1698" y="1197">4.91 ms</text><text class="v" x="1698" y="1203.7">9.89 ms</text><text class="v" x="1698" y="1210">16 ms</text>
</svg>

<!-- heatmap cells -->
<div class="cells" style="left:15px;top:181px;width:831px;height:11px">
<i style="background:#b0153f"></i><i style="background:#ad1440"></i><i style="background:#a60f40"></i><i style="background:#b0153f"></i><i style="background:#9d0a40"></i><i style="background:#ae1340"></i><i style="background:#b2163f"></i><i style="background:#a00b40"></i><i style="background:#ad1440"></i><i style="background:#980640"></i><i style="background:#b0153f"></i><i style="background:#ad1440"></i><i style="background:#9c0840"></i><i style="background:#b0153f"></i><i style="background:#9c0840"></i><i style="background:#b2173f"></i><i style="background:#ac1340"></i><i style="background:#a50e40"></i><i style="background:#c42b45"></i><i style="background:#b61a40"></i><i style="background:#c02644"></i><i style="background:#c22844"></i><i style="background:#bc2142"></i><i style="background:#c32944"></i><i style="background:#ad1440"></i><i style="background:#c02644"></i><i style="background:#c22844"></i><i style="background:#b41940"></i><i style="background:#c32944"></i><i style="background:#b0153f"></i>
</div>
<div style="position:absolute;left:866px;top:168px;width:830px;height:12px;background:repeating-linear-gradient(90deg,#5a529f 0 27.1px,#45407f 27.1px 27.67px)"></div>
<div class="cells" style="left:866px;top:180px;width:830px;height:12px">
<i style="background:#b0153f"></i><i style="background:#b2173f"></i><i style="background:#a60f40"></i><i style="background:#b0153f"></i><i style="background:#9f0a40"></i><i style="background:#ab1240"></i><i style="background:#b0153f"></i><i style="background:#a00b40"></i><i style="background:#b5193f"></i><i style="background:#990640"></i><i style="background:#b0153f"></i><i style="background:#ab1240"></i><i style="background:#990640"></i><i style="background:#b5193f"></i><i style="background:#9f0a40"></i><i style="background:#b0153f"></i><i style="background:#ab1240"></i><i style="background:#a80f40"></i><i style="background:#c83045"></i><i style="background:#b81d40"></i><i style="background:#c42b45"></i><i style="background:#c02644"></i><i style="background:#b81d40"></i><i style="background:#c83045"></i><i style="background:#ab1240"></i><i style="background:#c42b45"></i><i style="background:#c42b45"></i><i style="background:#b0153f"></i><i style="background:#c83045"></i><i style="background:#b0153f"></i>
</div>

<!-- top tiles -->
<div class="s top dk c big" style="left:2.7px;width:210.3px">0</div>
<div class="s top md c big" style="left:216px;width:352px">No data</div>
<div class="s top md ip" style="left:570px;width:117.5px"><span>172.20.117.227</span><b>0<small>%</small></b></div>
<div class="s top md ip" style="left:688px;width:117px"><span>172.20.165.182</span><b>0<small>%</small></b></div>
<div class="s top md ip" style="left:805px;width:117px"><span>172.20.211.244</span><b>0<small>%</small></b></div>
<div class="s top kn" style="left:925px;width:70px;background:linear-gradient(100deg,#ab3dc8,#a168d2)">ConfigMap<b>48</b></div>
<div class="s top kn" style="left:996px;width:69px;background:linear-gradient(100deg,#3f2cc5,#5f7fd8)">Node<b>28</b></div>
<div class="s top dk kn" style="left:1066px;width:69px">Pod<b>18</b></div>
<div class="s top dk kn" style="left:1137px;width:69px">Service<b>17</b></div>
<div class="s top dk kn" style="left:1207px;width:70px">IPPool<b>16</b></div>
<div class="s top dk c big" style="left:1280px;width:423px">No data</div>

<!-- threads -->
<div class="s th dk" style="top:849px">172.20.117.227<b>29</b></div>
<div class="s th dk" style="top:867.3px">172.20.165.182<b>29</b></div>
<div class="s th" style="top:885.7px;background:linear-gradient(100deg,#ab3dc8,#a168d2)">172.20.211.244<b>30</b></div>

<!-- deprecated -->
<div class="s dp" style="top:849px;height:10px;background:linear-gradient(100deg,#46a049,#6db353)">horizontalpodautoscalers - v2beta2<b>1</b></div>
<div class="s dp" style="top:860px;height:10px;background:linear-gradient(100deg,#aaa00c,#d9990c);color:#5f5a10">horizontalpodautoscalers - v2beta2<b>1</b></div>
<div class="s dp" style="top:871px;height:11px;background:linear-gradient(100deg,#3f74ff,#6eb7ff)">cronjobs - v1beta1<b>1</b></div>
<div class="s dp" style="top:883px;height:10px;background:linear-gradient(100deg,#b86b00,#f24f00)">cronjobs - v1beta1<b>1</b></div>
<div class="s dp" style="top:894px;height:10px;background:linear-gradient(100deg,#e01b1b,#ee2e5b)">endpointslices - v1beta1<b>1</b></div>

<!-- priority stats -->
<div class="s st dk" style="left:2.7px;width:241.9px">catch-all<b>31</b></div>
<div class="s st dk" style="left:246px;width:241.7px">global-default<b>123</b></div>
<div class="s st dk" style="left:489px;width:242px">leader-election<b>62</b></div>
<div class="s st dk" style="left:732px;width:241.7px">node-high<b>245</b></div>
<div class="s st dk" style="left:975px;width:242px">system<b>184</b></div>
<div class="s st dk" style="left:1217px;width:243px">workload-high<b>245</b></div>
<div class="s st dk" style="left:1460px;width:242px">workload-low<b>613</b></div>

<!-- scrollbar + background photo strip -->
<div style="position:absolute;left:1705px;top:0;width:1.5px;height:1254px;background:#4a4b50"></div>
<div style="position:absolute;left:1706.5px;top:0;width:11.5px;height:1254px;background:linear-gradient(180deg,#2f312d 0,#2a2c28 30px,#4c5052 36px,#565c5e 100px,#7c7c7a 108px,#7d7768 118px,#7d7768 123px,#1c1f28 126px,#2a2c34 165px,#6e6e70 172px,#7a7a7a 198px,#0f1838 202px,#1a2a5c 225px,#0c0f28 253px,#07070f 258px,#07070f 366px,#555 367px,#555 368px,#0a0a0c 369px,#0a0a0c 415px,#3a3a3a 425px,#2e2e2e 460px,#101012 475px,#5e5e5e 490px,#6a6a6a 600px,#444 625px,#131315 645px,#0b0b0d 950px,#141417 1000px,#18181c 1254px)"></div>
</body></html>
